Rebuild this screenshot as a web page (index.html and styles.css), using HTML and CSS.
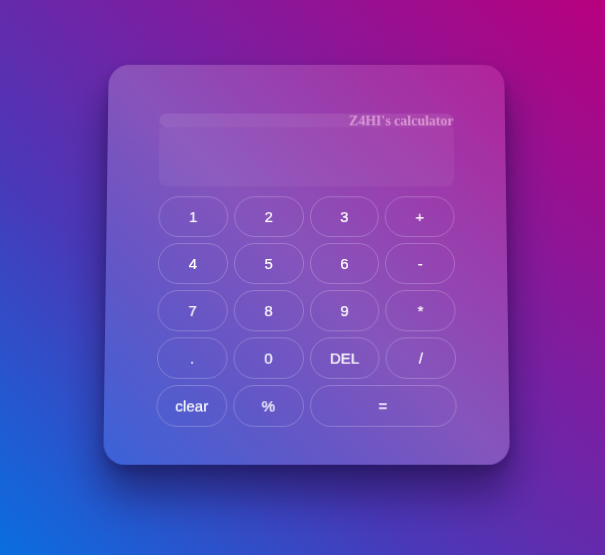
FILE: index.html
```html
<!DOCTYPE html>
<html>
<head>
<meta charset="utf-8">
<link rel="stylesheet" href="styles.css">
</head>
<body>
<div class="stage">
  <div class="calc">
    <div class="title">Z4HI's calculator</div>
    <div class="screen"></div>
    <div class="keys">
      <button class="key">1</button>
      <button class="key">2</button>
      <button class="key">3</button>
      <button class="key">+</button>
      <button class="key">4</button>
      <button class="key">5</button>
      <button class="key">6</button>
      <button class="key">-</button>
      <button class="key">7</button>
      <button class="key">8</button>
      <button class="key">9</button>
      <button class="key">*</button>
      <button class="key">.</button>
      <button class="key">0</button>
      <button class="key">DEL</button>
      <button class="key">/</button>
      <button class="key">clear</button>
      <button class="key">%</button>
      <button class="key wide">=</button>
    </div>
  </div>
</div>
</body>
</html>
```

FILE: styles.css
```css
html, body {
  margin: 0;
  height: 100%;
}
body {
  background: linear-gradient(to top right, #0a6ee0 0%, #4a38b8 35%, #7a1fa2 62%, #b8007e 100%);
  font-family: "Liberation Sans", Arial, sans-serif;
  overflow: hidden;
}
.stage {
  display: flex;
  justify-content: center;
  padding-top: 62px;
  padding-left: 7px;
  perspective: 1000px;
}
.calc {
  width: 401px;
  height: 400px;
  box-sizing: border-box;
  padding: 50px 52px 0 52px;
  border-radius: 21px;
  background: linear-gradient(to top right, rgba(120,150,255,0.22), rgba(255,255,255,0.2) 50%, rgba(255,140,220,0.18));
  box-shadow: 0 28px 40px rgba(20, 10, 60, 0.55), 0 6px 12px rgba(20,10,60,0.25);
  transform: rotateX(4deg);
  display: flex;
  flex-direction: column;
}
.title {
  height: 14px;
  line-height: 16px;
  background: rgba(255,255,255,0.09);
  border-radius: 7px;
  text-align: right;
  font-family: "Liberation Serif", "Times New Roman", serif;
  font-weight: bold;
  font-size: 14px;
  color: rgba(255, 215, 240, 0.55);
  filter: blur(0.4px);
}
.screen {
  height: 60px;
  background: rgba(255,255,255,0.05);
  border-radius: 0 0 8px 8px;
  margin-bottom: 10px;
}
.keys {
  display: grid;
  grid-template-columns: repeat(4, 1fr);
  grid-auto-rows: 41px;
  gap: 6px 6px;
}
.key {
  font-family: "Liberation Sans", Arial, sans-serif;
  font-size: 15px;
  color: #fff;
  background: transparent;
  border: 1px solid rgba(255,255,255,0.22);
  border-radius: 21px;
  padding: 0;
  -webkit-text-stroke: 0.2px #fff;
}
.wide {
  grid-column: span 2;
}
```
